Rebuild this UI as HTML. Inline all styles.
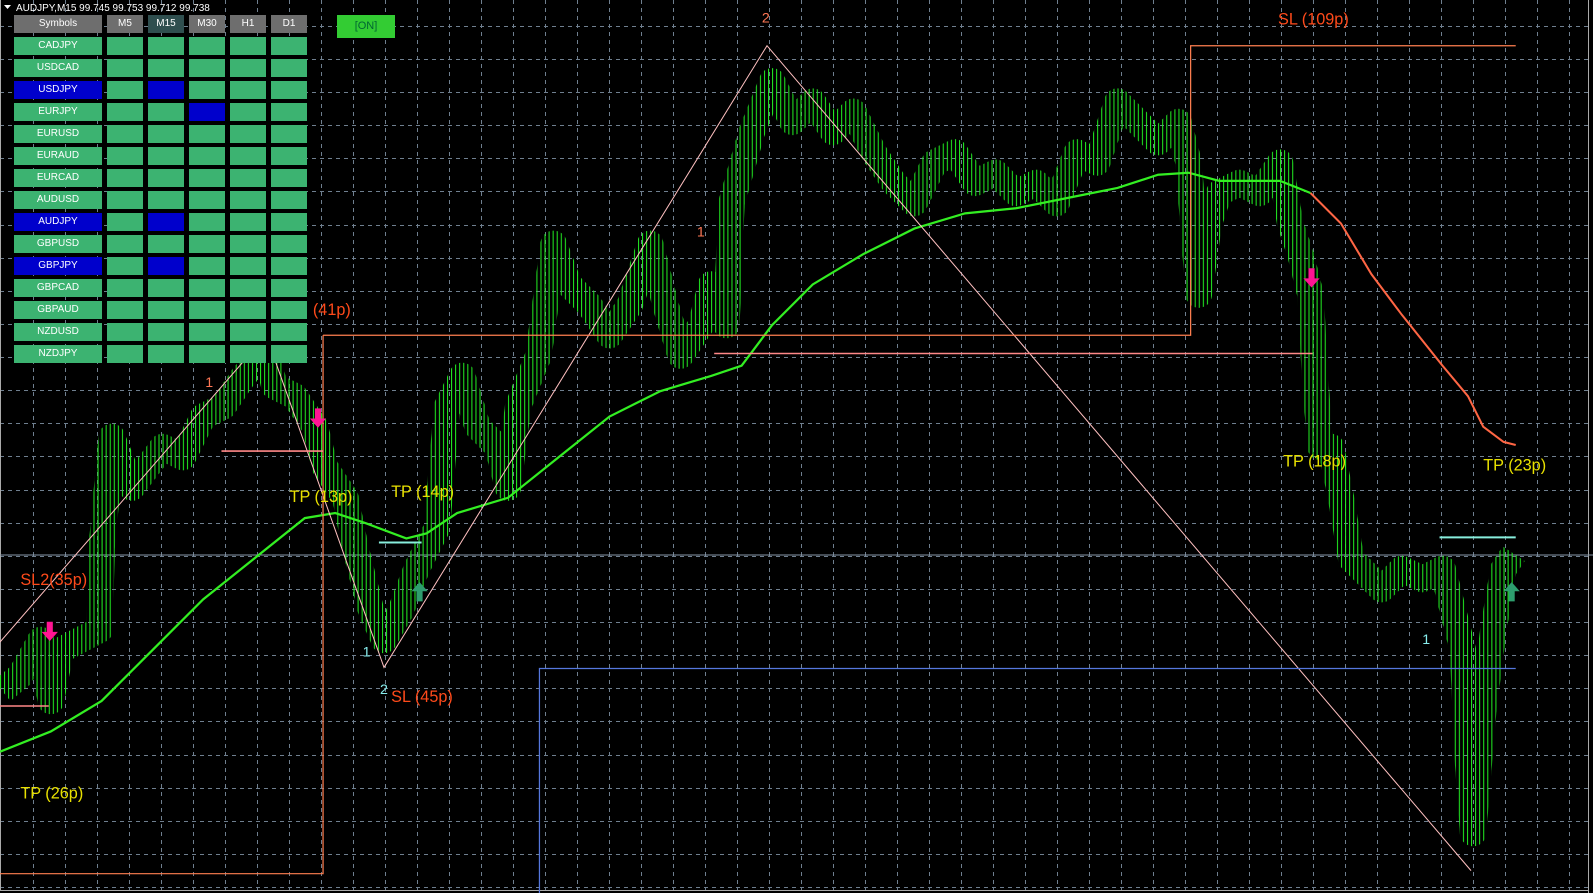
<!DOCTYPE html>
<html><head><meta charset="utf-8"><style>
html,body{margin:0;padding:0;background:#000;width:1593px;height:893px;overflow:hidden;font-family:"Liberation Sans",sans-serif}
#tb{position:absolute;left:0;top:0}
.c{position:absolute;height:18px;background:#3cb371;color:#fff;font-size:10px;line-height:18px;text-align:center}
.h{background:#6e6e6e;color:#fff}
.b{background:#0000cc}
</style></head><body>
<svg width="1593" height="893" style="position:absolute;left:0;top:0">
<defs>
<pattern id="st" width="4" height="40" patternUnits="userSpaceOnUse"><rect x="0" y="0" width="1" height="40" fill="#22ee22"/></pattern>
</defs>
<g stroke="#6f7f8f" stroke-width="1" stroke-dasharray="4,4">
<path d="M33.5 0V890M65.5 0V890M97.5 0V890M129.5 0V890M161.5 0V890M193.5 0V890M225.5 0V890M257.5 0V890M289.5 0V890M321.5 0V890M353.5 0V890M385.5 0V890M417.5 0V890M449.5 0V890M481.5 0V890M513.5 0V890M545.5 0V890M577.5 0V890M609.5 0V890M641.5 0V890M673.5 0V890M705.5 0V890M737.5 0V890M769.5 0V890M801.5 0V890M833.5 0V890M865.5 0V890M897.5 0V890M929.5 0V890M961.5 0V890M993.5 0V890M1025.5 0V890M1057.5 0V890M1089.5 0V890M1121.5 0V890M1153.5 0V890M1185.5 0V890M1217.5 0V890M1249.5 0V890M1281.5 0V890M1313.5 0V890M1345.5 0V890M1377.5 0V890M1409.5 0V890M1441.5 0V890M1473.5 0V890M1505.5 0V890M1537.5 0V890M1569.5 0V890"/>
<path d="M0 26.5H1588M0 59.5H1588M0 92.5H1588M0 125.5H1588M0 158.5H1588M0 191.5H1588M0 225.5H1588M0 258.5H1588M0 291.5H1588M0 324.5H1588M0 357.5H1588M0 390.5H1588M0 423.5H1588M0 456.5H1588M0 490.5H1588M0 523.5H1588M0 556.5H1588M0 589.5H1588M0 622.5H1588M0 655.5H1588M0 688.5H1588M0 721.5H1588M0 755.5H1588M0 788.5H1588M0 821.5H1588M0 854.5H1588M0 887.5H1588"/>
</g>
<path d="M0.5 0V890M1588.5 0V893M0 890.5H1588" stroke="#aaa" fill="none"/>
<path d="M0 555H1593" stroke="#8899aa" stroke-width="1"/>
<g transform="scale(1.0159)">
<polyline fill="none" stroke="url(#st)" stroke-width="26" stroke-linejoin="round" points="2,680 20,665 40,630 50,690 60,640 98,620 100,540 110,430 130,480 160,440 180,450 200,410 220,400 240,370 262,345 270,380 290,390 310,420 320,460 340,490 350,540 365,600 378,630 395,600 410,560 430,520 440,400 455,370 470,420 490,440 500,480 510,400 530,350 545,240 560,280 580,300 600,330 620,300 640,240 655,300 670,350 690,320 700,280 715,320 720,200 740,130 760,80 780,120 800,100 820,130 840,110 860,150 880,180 900,200 920,160 940,150 960,180 980,170 1000,190 1020,180 1040,200 1060,150 1080,160 1100,100 1120,120 1140,140 1160,120 1170,160 1180,290 1190,220 1200,190 1220,180 1240,190 1260,160 1270,220 1280,250 1290,290 1295,380 1300,440 1310,440 1320,490 1330,550 1340,560 1360,580 1380,560 1400,570 1420,560 1440,640 1445,750 1450,820 1460,700 1470,620 1480,560 1490,545"/>
<polyline fill="none" stroke="#33ee22" stroke-width="2.2" points="0,740 50,720 100,690 150,640 200,590 250,550 300,510 330,505 360,515 400,530 420,525 450,505 500,490 550,450 600,410 650,385 700,370 730,360 760,320 800,280 850,250 900,225 950,210 1000,205 1050,195 1100,185 1140,172 1170,170 1200,178 1260,178 1290,190"/>
<polyline fill="none" stroke="#ff6644" stroke-width="2" points="1290,190 1320,220 1350,270 1380,310 1420,360 1445,390 1460,420 1480,435 1492,438"/>
<polyline fill="none" stroke="#ffc0c0" stroke-width="1" points="0,632 262,330 378,657 755,45 1448,857"/>
<g fill="none" stroke="#ff7f50" stroke-width="1.2">
<path d="M318 330V860H0M318 330H1172V45H1492"/>
</g>
<g stroke="#ff8888" stroke-width="1.5"><path d="M703 348H1292M218 444H318M0 695H48"/></g>
<path d="M531 879V658H1492" stroke="#5577dd" fill="none" stroke-width="1.2"/>
<path d="M373 534H415M1417 529H1492" stroke="#88eedd" stroke-width="2"/>
<g font-size="16" font-family="Liberation Sans,sans-serif">
<text x="1258" y="24" fill="#ff4a1a">SL (109p)</text>
<text x="308" y="310" fill="#ff4a1a">(41p)</text>
<text x="20" y="576" fill="#ff4a1a">SL2(35p)</text>
<text x="385" y="691" fill="#ff4a1a">SL (45p)</text>
<text x="285" y="494" fill="#e8e000">TP (13p)</text>
<text x="385" y="489" fill="#e8e000">TP (14p)</text>
<text x="20" y="786" fill="#e8e000">TP (26p)</text>
<text x="1263" y="459" fill="#e8e000">TP (18p)</text>
<text x="1460" y="463" fill="#e8e000">TP (23p)</text>
<g font-size="14">
<text x="750" y="22" fill="#ff7755">2</text>
<text x="686" y="233" fill="#ff7755">1</text>
<text x="202" y="381" fill="#ff7755">1</text>
<text x="258" y="318" fill="#ff9988">2</text>
<text x="357" y="646" fill="#88eeee">1</text>
<text x="374" y="683" fill="#88eeee">2</text>
<text x="1400" y="634" fill="#88eeee">1</text>
</g></g>
<g fill="#ff1493">
<path d="M310 402h6v10h5l-8 9-8-9h5z"/>
<path d="M46 612h6v10h5l-8 9-8-9h5z"/>
<path d="M1288 264h6v10h5l-8 9-8-9h5z"/>
</g>
<g fill="#2e9e6e">
<path d="M410 592h6v-10h5l-8-9-8 9h5z"/>
<path d="M1485 592h6v-10h5l-8-9-8 9h5z"/>
</g>
</g>
<text x="16" y="11" fill="#fff" font-size="10" font-family="Liberation Sans,sans-serif">AUDJPY,M15  99.745 99.753 99.712 99.738</text>
<path d="M4 5h7l-3.5 4z" fill="#fff"/>
</svg>
<div id="tb">
<div class="c h" style="left:14px;top:15px;width:88px">Symbols</div>
<div class="c h" style="left:107px;top:15px;width:36px">M5</div>
<div class="c h" style="left:148px;top:15px;width:36px;background:#2f4f4f">M15</div>
<div class="c h" style="left:189px;top:15px;width:36px">M30</div>
<div class="c h" style="left:230px;top:15px;width:36px">H1</div>
<div class="c h" style="left:271px;top:15px;width:36px">D1</div>
<div style="position:absolute;left:337px;top:15px;width:58px;height:23px;background:#33cc33;color:#063;font-size:11px;line-height:23px;text-align:center">[ON]</div>
</div>
<div style="position:absolute;left:0;top:0">
<div class="c" style="left:14px;top:37px;width:88px">CADJPY</div>
<div class="c" style="left:14px;top:59px;width:88px">USDCAD</div>
<div class="c b" style="left:14px;top:81px;width:88px">USDJPY</div>
<div class="c" style="left:14px;top:103px;width:88px">EURJPY</div>
<div class="c" style="left:14px;top:125px;width:88px">EURUSD</div>
<div class="c" style="left:14px;top:147px;width:88px">EURAUD</div>
<div class="c" style="left:14px;top:169px;width:88px">EURCAD</div>
<div class="c" style="left:14px;top:191px;width:88px">AUDUSD</div>
<div class="c b" style="left:14px;top:213px;width:88px">AUDJPY</div>
<div class="c" style="left:14px;top:235px;width:88px">GBPUSD</div>
<div class="c b" style="left:14px;top:257px;width:88px">GBPJPY</div>
<div class="c" style="left:14px;top:279px;width:88px">GBPCAD</div>
<div class="c" style="left:14px;top:301px;width:88px">GBPAUD</div>
<div class="c" style="left:14px;top:323px;width:88px">NZDUSD</div>
<div class="c" style="left:14px;top:345px;width:88px">NZDJPY</div>
</div>
<div style="position:absolute;left:107px;top:37px;width:200px;height:326px;background:
linear-gradient(90deg,transparent 36px,#000 36px,#000 41px,transparent 41px,transparent 77px,#000 77px,#000 82px,transparent 82px,transparent 118px,#000 118px,#000 123px,transparent 123px,transparent 159px,#000 159px,#000 164px,transparent 164px),
repeating-linear-gradient(180deg,#3cb371 0,#3cb371 18px,#000 18px,#000 22px)"></div>
<div class="c b" style="left:148px;top:81px;width:36px"></div>
<div class="c b" style="left:189px;top:103px;width:36px"></div>
<div class="c b" style="left:148px;top:213px;width:36px"></div>
<div class="c b" style="left:148px;top:257px;width:36px"></div>
</body></html>
